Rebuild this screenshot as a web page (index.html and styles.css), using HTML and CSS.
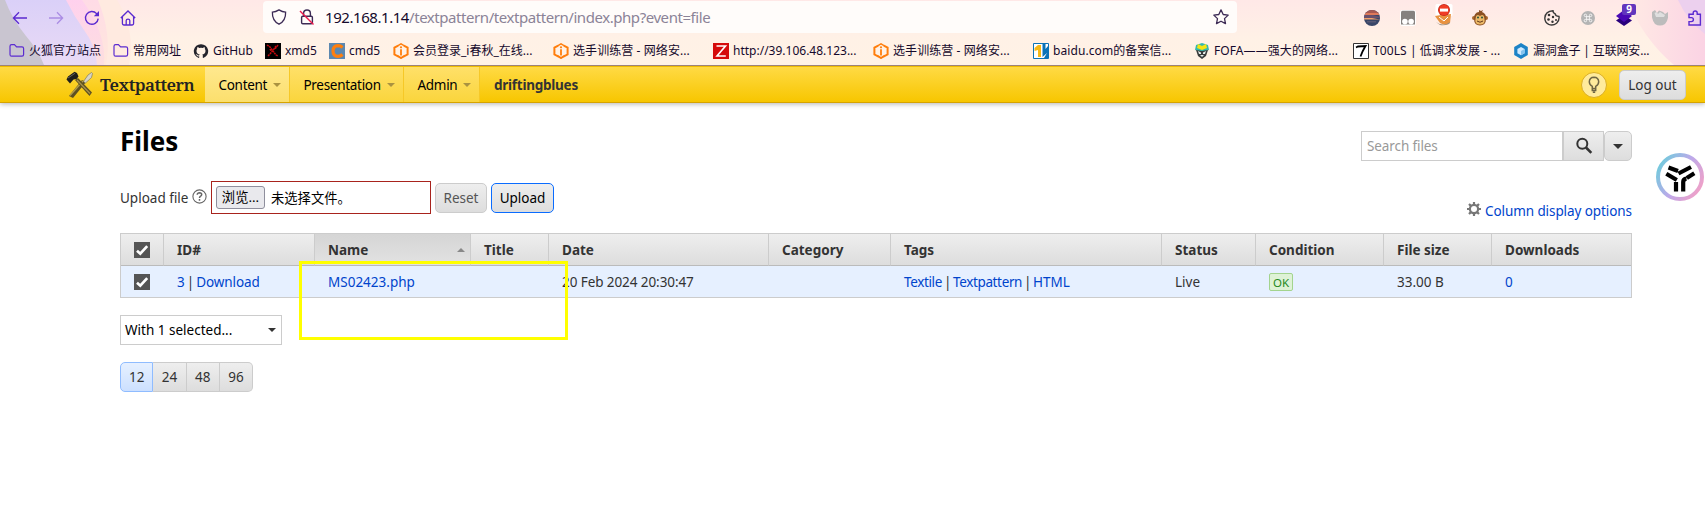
FILE: index.html
```html
<!DOCTYPE html>
<html lang="en">
<head>
<meta charset="utf-8">
<title>Textpattern - Files</title>
<link rel="stylesheet" href="styles.css">
</head>
<body>
<svg width="0" height="0" class="defs">
  <symbol id="folder" viewBox="0 0 16 16"><path d="M1 3.2Q1 1.6 2.6 1.6H5.4L7.6 3.8H13Q14.6 3.8 14.6 5.4V11.6Q14.6 13.2 13 13.2H2.6Q1 13.2 1 11.6Z" fill="none" stroke="#5b2bd0" stroke-width="1.2"/></symbol>
  <symbol id="ichun" viewBox="0 0 16 16"><path d="M5.2 2.6 1.4 4.6V11.4L6 14M10.8 2.6 14.6 4.6V11.4L10 14M4.2 12.6 8 15 11.8 12.6" fill="none" stroke="#ff7e0c" stroke-width="2"/><path d="M8 6.3V12.5" stroke="#ff7e0c" stroke-width="1.8"/><path d="M5 2.6 8 .8 11 2.6" fill="none" stroke="#ff7e0c" stroke-width="1.4"/><circle cx="8" cy="4.3" r="1.1" fill="#ff7e0c"/></symbol>
  <symbol id="tick" viewBox="0 0 16 16"><path d="M0 0H16V16H0Z" fill="#555"/><path d="M3 8.7 6.3 11.7 13.2 4.2" fill="none" stroke="#fff" stroke-width="2.7"/></symbol>
</svg>

<header class="browser">
  <svg class="theme" width="1705" height="65" viewBox="0 0 1705 65">
    <defs>
      <linearGradient id="gBase" x1="0" y1="0" x2="0" y2="1"><stop offset="0" stop-color="#ffe8e7"/><stop offset=".6" stop-color="#fff1e6"/><stop offset="1" stop-color="#fff2e5"/></linearGradient>
      <linearGradient id="gPink" x1="0" y1="0" x2="0" y2="1"><stop offset="0" stop-color="#ffcdf1"/><stop offset="1" stop-color="#fcdbe0"/></linearGradient>
      <linearGradient id="gRose" x1="0" y1="0" x2="0" y2="1"><stop offset="0" stop-color="#ffdbe6"/><stop offset="1" stop-color="#ffe8dc"/></linearGradient>
      <linearGradient id="gLilac" x1="0" y1="0" x2="0" y2="1"><stop offset="0" stop-color="#dad0f8"/><stop offset="1" stop-color="#e9daf5"/></linearGradient>
      <linearGradient id="gRight" x1="0" y1="0" x2="1" y2="0"><stop offset="0" stop-color="#ffeae4"/><stop offset="1" stop-color="#fbd3e4"/></linearGradient>
    </defs>
    <path d="M0 0H1705V65H0Z" fill="url(#gBase)"/>
    <path d="M0 0H117Q136 30 129 65H0Z" fill="#ffeae0"/>
    <path d="M0 0H98Q112 34 106 65H0Z" fill="url(#gRose)"/>
    <path d="M0 0H82Q107 34 104 65H0Z" fill="url(#gPink)" opacity=".7"/>
    <path d="M0 0H66Q74 16 84 30Q96 46 97 65H0Z" fill="url(#gLilac)"/>
    <path d="M0 0H5Q12 19 26 36Q38 50 44 65H0Z" fill="#c9c5d0"/>
    <path d="M1628 0Q1642 38 1674 65H1705V0Z" fill="url(#gRight)"/>
    <path d="M1678 0Q1688 22 1705 34V0Z" fill="#ecd0ee"/>
  </svg>
  <div class="toolbar">
    <div class="navicons">
      <svg width="16" height="16" viewBox="0 0 16 16" fill="none" stroke="#5b2bd0" stroke-width="1.3"><path d="M15 8H1.5M7 2.3 1.4 8 7 13.7"/></svg>
      <svg width="16" height="16" viewBox="0 0 16 16" fill="none" stroke="#ab8de4" stroke-width="1.3"><path d="M1 8H14.5M9 2.3 14.6 8 9 13.7"/></svg>
      <svg width="16" height="16" viewBox="0 0 16 16" fill="none" stroke="#5b2bd0" stroke-width="1.4"><path d="M14.2 8.6A6.4 6.4 0 1 1 12.6 3.6L14 5"/><path d="M15 1V6.2H9.8Z" fill="#5b2bd0" stroke="none"/></svg>
      <svg width="16" height="16" viewBox="0 0 16 16" fill="none" stroke="#5b2bd0" stroke-width="1.3"><path d="M.8 8 8 1 15.2 8M2.4 6.6V13.6Q2.4 15 3.8 15H12.2Q13.6 15 13.6 13.6V6.6M6.2 15V10.6Q6.2 9.2 8 9.2Q9.8 9.2 9.8 10.6V15"/></svg>
    </div>
    <div class="urlbar">
      <svg width="16" height="16" viewBox="0 0 16 16" fill="none" stroke="#3c2a55" stroke-width="1.3"><path d="M8 .9Q11.3 3 14.6 3.2Q15 11.6 8 15.2Q1 11.6 1.4 3.2Q4.7 3 8 .9Z"/></svg>
      <svg width="16" height="16" viewBox="0 0 16 16" fill="none"><path d="M4.6 7V4.4Q4.6 1 8 1Q11.4 1 11.4 4.4V7M3.8 7.2H12.2Q13.4 7.2 13.4 8.4V13.6Q13.4 14.8 12.2 14.8H3.8Q2.6 14.8 2.6 13.6V8.4Q2.6 7.2 3.8 7.2Z" stroke="#3c2a55" stroke-width="1.4"/><path d="M1 2 14.5 15.4" stroke="#ee1a4e" stroke-width="1.4"/></svg>
      <span class="url"><b>192.168.1.14</b>/textpattern/textpattern/index.php?event=file</span>
      <svg class="star" width="16" height="16" viewBox="0 0 16 16" fill="none" stroke="#3c2a55" stroke-width="1.3" stroke-linejoin="round"><path d="M8 .9 10.2 5.5 15.2 6.1 11.5 9.6 12.5 14.6 8 12.2 3.5 14.6 4.5 9.6 .8 6.1 5.8 5.5Z"/></svg>
    </div>
    <div class="exts">
      <svg width="16" height="16" viewBox="0 0 16 16"><clipPath id="disc"><circle cx="8" cy="8" r="8"/></clipPath><g clip-path="url(#disc)"><path d="M0 0H16V16H0Z" fill="#384668"/><path d="M0 0H16V3H0Z" fill="#a85851"/><path d="M0 3H16V5H0Z" fill="#df7959"/><path d="M0 5H9L16 7V8H0Z" fill="#6a506c"/><path d="M0 8H8L16 9.5H0Z" fill="#f3a06b"/><path d="M3 11.5H12V12.3H3Z" fill="#766a80"/></g></svg>
      <svg width="16" height="16" viewBox="0 0 16 16"><rect width="16" height="16" rx="3" fill="#fff"/><path d="M2.5.8H13.5Q15 .8 15 2.3V14.5H1V2.3Q1 .8 2.5 .8Z" fill="#85817f"/><circle cx="4.9" cy="11.6" r="2.8" fill="#fff"/><circle cx="11.1" cy="11.6" r="2.8" fill="#fff"/></svg>
      <svg class="up" width="20" height="22" viewBox="0 0 20 22"><rect x="1.5" width="17" height="12" rx="1.5" fill="#fff"/><path d="M1 12 7 11 17 10 16 19Q12 22 6 19Z" fill="#e89240"/><path d="M2 18Q9 23 16 18L15 20Q10 22 6 21Z" fill="#9c8e7e"/><path d="M5 13 10 17 14 13" stroke="#fff" fill="none"/><circle cx="10" cy="6" r="6" fill="#c6281c"/><circle cx="10" cy="6" r="5.2" fill="#f13c24"/><path d="M6 4.6H14V7.6H6Z" fill="#fff"/></svg>
      <svg width="16" height="16" viewBox="0 0 16 16"><circle cx="2" cy="8" r="2" fill="#a9672b"/><circle cx="14" cy="8" r="2" fill="#a9672b"/><path d="M7 0 9 1 11 0 10 2Q14.5 3.5 14 8.5Q14 15.5 8 15.6Q2 15.5 2 8.5Q2 2.5 7 2Z" fill="#8b5023"/><path d="M8 6Q12 3.5 12.3 8Q14 14.5 8 14.6Q2 14.5 3.7 8Q4 3.5 8 6Z" fill="#ecb968"/><circle cx="6" cy="7.5" r="1" fill="#24533e"/><circle cx="10" cy="7.5" r="1" fill="#24533e"/><path d="M5 11Q8 13.5 11 11" stroke="#64391b" fill="none"/></svg>
      <svg class="cookie" width="16" height="16" viewBox="0 0 16 16" fill="none"><path d="M9 .8Q9 3.2 11 3.6Q11.6 6.2 15 6.5Q15.6 10.5 12.6 13.2Q9 16 4.7 14.4Q.8 12.4 .8 8Q1.4 1.2 9 .8Z" stroke="#3a3a3a" stroke-width="1.4"/><g fill="#333"><circle cx="5" cy="5" r="1.3"/><circle cx="9" cy="7" r="1.2"/><circle cx="4.5" cy="9.5" r="1.3"/><circle cx="8.5" cy="11.8" r="1.2"/><circle cx="12" cy="10" r="1"/></g></svg>
      <svg width="16" height="16" viewBox="0 0 16 16"><circle cx="8" cy="8" r="7" fill="#b4b4b4"/><path d="M6.6 6.6H9.4V9.4H6.6ZM6.6 6.6H5.4A1.2 1.2 0 1 1 6.6 5.4ZM9.4 6.6V5.4A1.2 1.2 0 1 1 10.6 6.6ZM9.4 9.4H10.6A1.2 1.2 0 1 1 9.4 10.6ZM6.6 9.4V10.6A1.2 1.2 0 1 1 5.4 9.4Z" fill="none" stroke="#fff" stroke-width=".8"/></svg>
      <span class="layers"><svg width="16" height="16" viewBox="0 0 16 16"><path d="M8 5 16 10.5 8 16 0 10.5Z" fill="#28007c"/><path d="M8 0 16 6 8 12 0 6Z" fill="#4a09b5"/></svg><i>9</i></span>
      <svg width="16" height="16" viewBox="0 0 16 16"><path d="M0 2 3 0 5 3 7 .5 11 2 13 4 16 2Q17 10 13 14Q8 17 3 14Q-1 9 0 2Z" fill="#bcbcbc"/><path d="M2.5 3 4.5 2 6 4 8 2 12 4.5 13 5 12 7H4Z" fill="#dfdfdf"/></svg>
      <svg class="puzzle" width="16" height="16" viewBox="0 0 16 16" fill="none" stroke="#5b2bd0" stroke-width="1.4"><path d="M1 6V4.2H5.2V3Q5.2 1 7.2 1Q9.2 1 9.2 3V4.2H12.4V15H1V11.6H3.4Q5.4 11.6 5.4 9.6Q5.4 7.6 3.4 7.6H1Z"/></svg>
    </div>
  </div>
  <nav class="bookmarks">
    <a><svg><use href="#folder"/></svg><span>火狐官方站点</span></a>
    <a><svg><use href="#folder"/></svg><span>常用网址</span></a>
    <a><svg viewBox="0 0 16 16"><path fill="#24242c" d="M8 1.2A7 7 0 0 0 5.8 14.9C6.1 15 6.2 14.8 6.2 14.6V13.3C4.2 13.7 3.8 12.4 3.8 12.4C3.5 11.6 3 11.4 3 11.4C2.4 10.9 3.1 10.9 3.1 10.9C3.8 11 4.1 11.6 4.1 11.6C4.8 12.7 5.8 12.4 6.2 12.2C6.3 11.8 6.5 11.5 6.7 11.3C5.1 11.1 3.5 10.5 3.5 7.9C3.5 7.1 3.7 6.5 4.2 6C4.1 5.8 3.9 5.1 4.3 4.2C4.3 4.2 4.9 4 6.2 4.9A6.7 6.7 0 0 1 9.8 4.9C11.1 4 11.7 4.2 11.7 4.2C12.1 5.1 11.9 5.8 11.8 6C12.3 6.5 12.5 7.1 12.5 7.9C12.5 10.5 10.9 11.1 9.3 11.3C9.6 11.5 9.8 12 9.8 12.6V14.6C9.8 14.8 9.9 15 10.2 14.9A7 7 0 0 0 8 1.2Z"/></svg><span>GitHub</span></a>
    <a><svg viewBox="0 0 16 16"><path d="M0 0H16V16H0Z"/><path d="M2 2 5 4 8 8 11 12 13 13M11 3 9 6 5 11 3 13M13 2 10 6M5 6 6 8" stroke="#c90c10" stroke-width="1.5" stroke-dasharray="2 .7" fill="none"/></svg><span>xmd5</span></a>
    <a><svg viewBox="0 0 16 16"><path d="M0 0H16V16H0Z" fill="#5c88b0"/><path d="M13.5 4.5Q11.5 2.6 9 2.6Q4 2.8 4 8Q4 13.2 9 13.4Q11.5 13.4 13.5 11.5" fill="none" stroke="#ff7f0e" stroke-width="3.2"/></svg><span>cmd5</span></a>
    <a><svg><use href="#ichun"/></svg><span>会员登录_i春秋_在线...</span></a>
    <a class="loose"><svg><use href="#ichun"/></svg><span>选手训练营 - 网络安...</span></a>
    <a><svg viewBox="0 0 16 16"><path d="M0 0H16V16H0Z" fill="#d50b0b"/><path d="M3.5 3H12.5L4 13H12.8" fill="none" stroke="#fff" stroke-width="1.6"/></svg><span>http://39.106.48.123...</span></a>
    <a class="loose"><svg><use href="#ichun"/></svg><span>选手训练营 - 网络安...</span></a>
    <a class="loose"><svg viewBox="0 0 16 16"><path d="M.5.5H15.5V15.5H.5Z" fill="#fff" stroke="#0a73b8"/><path d="M1.5 5 5 2H8V14H5V7L1.5 8Z" fill="#f7b916"/><path d="M9.5 1H12.5V6L15 3V15H11L14 10 9.5 14Z" fill="#0a73b8"/></svg><span>baidu.com的备案信...</span></a>
    <a class="loose"><svg viewBox="0 0 16 16"><path d="M2 2 8 0 14 2 15 7 8 9 1 7Z" fill="#34b9af"/><path d="M4 1 8 3 12 1 13 5 8 7 3 5Z" fill="#f5e413"/><path d="M2 7 8 8 14 7 12 13 8 16 4 13Z" fill="#393b3b"/><path d="M4 8 7 9.5V11H5ZM12 8 9 9.5V11H11ZM6 12H10L8 14Z" fill="#e6eee9"/></svg><span>FOFA——强大的网络...</span></a>
    <a class="loose"><svg viewBox="0 0 16 16"><path d="M.5.5H15.5V15.5H.5Z" fill="#fff" stroke="#333"/><path d="M3 4.5 5 3.5 12.5 3Q9.5 8 7.5 13.5" fill="none" stroke="#000" stroke-width="1.8"/></svg><span>T00LS | 低调求发展 - ...</span></a>
    <a class="tight"><svg viewBox="0 0 16 16"><path d="M8 0 14.8 4V12L8 16 1.2 12V4Z" fill="#1c83c6"/><path d="M8 4 11.6 6V10.2L8 12.3 4.4 10.2V6Z" fill="#cfeaff"/><path d="M8 8 11.6 6V10.2L8 12.3Z" fill="#86c4ee"/></svg><span>漏洞盒子 | 互联网安...</span></a>
  </nav>
</header>

<div class="txpbar">
  <a class="brand">
    <svg width="28" height="28" viewBox="0 0 28 28"><path d="M3 25 7 27 20 11 16 9Z" fill="#5f5222"/><path d="M4 24.5 17 10" stroke="#b39c48" stroke-width="1.4"/><path d="M17.5 10.5 22 4 25.5 1.5 26.5 2.5 25.5 6.5 19.5 12Z" fill="#d7d4c4" stroke="#807b62" stroke-width=".7"/><path d="M9 9 12 7 26 21.5 23.5 25Z" fill="#5f5222"/><path d="M11 9 24 22.5" stroke="#a8924a" stroke-width="1.3"/><path d="M.5 8.5 2 5.5 8.5 .8 11 2 12.5 5.5 10.5 8 7.5 8.5 4 12.5Z" fill="#1f1e1b"/><path d="M2 7 9 2.3" stroke="#66645d" stroke-width="1"/></svg>
    <span>Textpattern</span>
  </a>
  <ul class="menu">
    <li class="on"><span>Content</span><i></i></li>
    <li><span>Presentation</span><i></i></li>
    <li><span>Admin</span><i></i></li>
  </ul>
  <b class="site">driftingblues</b>
  <span class="bulb"><svg width="12" height="18" viewBox="0 0 12 18" fill="none" stroke="#6f6644" stroke-width="1.5"><path d="M4.3 10.3Q1.3 8.8 1.3 5.8Q1.5 1.3 6 1.2Q10.5 1.3 10.7 5.8Q10.7 8.8 7.7 10.3V14.5H4.3ZM4.3 12.4H7.7M4.8 16.3H7.2"/></svg></span>
  <a class="btn logout">Log out</a>
</div>

<main>
  <div class="top">
    <h1>Files</h1>
    <form class="search">
      <div class="field">Search files</div>
      <div class="go"><svg width="18" height="18" viewBox="0 0 18 18" fill="none" stroke="#333"><circle cx="7.3" cy="6.8" r="5" stroke-width="2"/><path d="M11 10.5 16.3 15.8" stroke-width="2.6"/></svg></div>
      <div class="more"><i></i></div>
    </form>
  </div>
  <div class="mid">
    <div class="upload">
      <label>Upload file</label>
      <svg class="help" width="15" height="15" viewBox="0 0 15 15" fill="none" stroke="#666"><circle cx="7.5" cy="7.5" r="6.6" stroke-width="1.1"/><path d="M5.2 5.8Q5.4 3.8 7.5 3.8Q9.7 3.9 9.7 5.7Q9.6 6.7 8.3 7.4Q7.5 7.9 7.5 9M7.5 10.1V11.7" stroke-width="1.5"/></svg>
      <div class="file"><span class="browse">浏览...</span><span>未选择文件。</span></div>
      <a class="btn reset">Reset</a>
      <a class="btn send">Upload</a>
    </div>
    <a class="cols"><svg width="14" height="14" viewBox="0 0 14 14" fill="none" stroke="#777"><circle cx="7" cy="7" r="4.1" stroke-width="2.2"/><path d="M7 0V2.5M7 11.5V14M0 7H2.5M11.5 7H14M2 2 3.9 3.9M10.1 10.1 12 12M12 2 10.1 3.9M3.9 10.1 2 12" stroke-width="2.2"/></svg><span>Column display options</span></a>
  </div>

  <div class="tablebox">
    <table>
      <colgroup><col class="c1"><col class="c2"><col class="c3"><col class="c4"><col class="c5"><col class="c6"><col class="c7"><col class="c8"><col class="c9"><col class="c10"><col></colgroup>
      <thead><tr><th><svg class="tick"><use href="#tick"/></svg></th><th>ID#</th><th class="sorted"><div>Name<i></i></div></th><th>Title</th><th>Date</th><th>Category</th><th>Tags</th><th>Status</th><th>Condition</th><th>File size</th><th>Downloads</th></tr></thead>
      <tbody><tr><td><svg class="tick"><use href="#tick"/></svg></td><td class="links"><a>3</a> | <a>Download</a></td><td><a>MS02423.php</a></td><td></td><td class="date">20 Feb 2024 20:30:47</td><td></td><td class="links tags"><a>Textile</a> | <a>Textpattern</a> | <a class="wide">HTML</a></td><td>Live</td><td><span class="ok">OK</span></td><td>33.00 B</td><td><a>0</a></td></tr></tbody>
    </table>
    <div class="marker"></div>
  </div>

  <div class="select"><span>With 1 selected...</span><i></i></div>
  <div class="pages"><span class="cur">12</span><span>24</span><span>48</span><span>96</span></div>
</main>

<div class="floater"><svg width="48" height="48" viewBox="0 0 48 48"><defs><linearGradient id="ring" x1="0" y1=".2" x2="1" y2=".8"><stop offset="0" stop-color="#70cbdc"/><stop offset=".5" stop-color="#bda9ea"/><stop offset="1" stop-color="#f2a0c6"/></linearGradient></defs><circle cx="24" cy="24" r="22" fill="#fff" stroke="url(#ring)" stroke-width="4"/><g fill="none" stroke="#000" stroke-width="4.2"><path d="M12.5 14.6 22 18M10.3 20.8 20.8 27M22.5 20.5 35 14M38.3 20.3 30.8 25M27.2 38.5V29Q27.2 26 30.5 25.6M20 38.5V29"/></g></svg></div>
</body>
</html>
```
FILE: styles.css
```css
* { box-sizing: border-box; }
body { margin: 0; width: 1705px; height: 528px; overflow: hidden; background: #fff; color: #333; font: 13.5px/20px "Noto Sans", "Noto Sans CJK SC", sans-serif; position: relative; }
svg { display: block; flex: none; }
.defs { position: absolute; }

.browser { position: relative; height: 66px; border-bottom: 1px solid #9c8379; }
.theme { position: absolute; left: 0; top: 0; }
.toolbar, .bookmarks { position: relative; }
.toolbar { display: flex; height: 34px; align-items: center; padding-top: 1px; }
.navicons { display: flex; gap: 20px; padding-left: 12px; width: 263px; }
.urlbar { width: 974px; height: 32px; margin-top: -1px; background: #fffcfa; border-radius: 4px; display: flex; align-items: center; gap: 12px; padding: 0 8px 0 8px; }
.url { color: #8b8397; font-size: 15px; letter-spacing: -.44px; margin-left: -2px; white-space: nowrap; }
.url b { color: #15092c; font-weight: 400; }
.star { margin-left: auto; }
.exts { display: flex; align-items: center; gap: 20px; padding-left: 127px; width: 468px; overflow: hidden; height: 34px; }
.exts > * { flex: none; }
.up { margin: -5px -2px 0; }
.cookie { margin-left: 36px; }
.layers { position: relative; height: 16px; }
.layers i { position: absolute; left: 6px; top: -6px; width: 14px; height: 11px; background: #6236bd; color: #fff; border-radius: 2px; font: 700 10px/11px "Noto Sans", sans-serif; text-align: center; }
.bookmarks { height: 31px; display: grid; grid-template-columns: 104px 80px 72px 64px 64px 160px 160px 160px 160px 161px 159px 160px 150px; padding-left: 9px; align-items: center; font-size: 12px; line-height: 16px; color: #15092c; }
.bookmarks a { display: flex; gap: 4px; align-items: center; white-space: nowrap; padding-top: 3px; }
.bookmarks svg { width: 16px; height: 16px; }
.loose { letter-spacing: .08px; }
.tight { letter-spacing: -.15px; }

.txpbar { height: 37px; border-top: 1px solid #f0bc00; border-bottom: 1px solid #d6a300; background: linear-gradient(#ffda44, #f7c600); box-shadow: 0 1px 5px rgba(0,0,0,.3); display: flex; align-items: center; }
.brand { display: flex; align-items: center; width: 205px; padding-left: 66px; gap: 6px; color: #222; font: 600 17px/26px "Noto Serif", "DejaVu Serif", serif; letter-spacing: -.5px; }
.menu { display: flex; list-style: none; margin: 0; padding: 0; height: 35px; color: #000; letter-spacing: -.3px; }
.menu li { display: flex; align-items: center; justify-content: space-between; padding: 1px 8px 0 13.5px; border-right: 1px solid #f6c827; width: 85px; background: linear-gradient(#ffe069, #fad53c); }
.menu li + li { width: 114px; }
.menu li + li + li { width: 76px; }
.menu li.on { background: linear-gradient(#ffe88e, #fbdf6d); }
.menu i { border: 4px solid transparent; border-top-color: #aa9240; border-bottom: 0; }
.site { margin: 1px 0 0 14px; letter-spacing: -.25px; }
.bulb { margin-left: auto; width: 26px; height: 26px; border-radius: 50%; border: 1px solid #dcb022; background: #ffeb9c; display: flex; align-items: center; justify-content: center; }
.btn { display: flex; align-items: center; justify-content: center; height: 30px; border: 1px solid #ccc; border-radius: 5px; background: linear-gradient(#eee, #ddd); }
.logout { width: 67px; margin: 0 19px 0 12px; }

main { padding: 28px 73px 0 120px; }
.top { display: flex; justify-content: space-between; height: 53px; }
h1 { margin: -8px 0 0; color: #000; font-size: 26px; line-height: 36px; }
.search { display: flex; height: 30px; }
.field { width: 202px; border: 1px solid #ccc; padding: 4px 5px; color: #999; letter-spacing: -.1px; }
.go { width: 41px; border: 1px solid #ccc; background: linear-gradient(#eee, #ddd); display: flex; align-items: center; justify-content: center; }
.more { width: 28px; border: 1px solid #ccc; border-radius: 5px; background: linear-gradient(#eee, #ddd); display: flex; align-items: center; justify-content: center; }
.more i { border: 5px solid transparent; border-top-color: #333; border-bottom: 0; }
.mid { display: flex; justify-content: space-between; height: 49px; }
.upload { display: flex; align-items: center; margin-top: -3px; height: 33px; }
.upload label { width: 73px; padding-top: 1px; }
.help { margin: -2px 3px 0 -1px; }
.file { width: 220px; height: 33px; border: 1px solid #a8231d; display: flex; align-items: center; gap: 6px; padding-left: 4px; color: #000; font-size: 13.3px; margin: 0 4px 0 1px; }
.browse { width: 49px; height: 23px; border: 1px solid #8f8f9d; border-radius: 3px; background: #e9e9ed; line-height: 21px; text-align: center; }
.reset { width: 52px; color: #555; margin: 1px 4px 0 0; }
.send { width: 63px; border-color: #0a6cff; color: #000; margin-top: 1px; }
.cols { display: flex; align-items: center; gap: 4px; color: #04c; height: 20px; margin-top: 17px; letter-spacing: -.08px; }
.cols svg { margin-top: -4px; }
.tablebox { position: relative; }
table { border-collapse: separate; border-spacing: 0; table-layout: fixed; width: 1512px; border: 1px solid #ccc; }
.c1 { width: 43px; } .c2 { width: 151px; } .c3 { width: 156px; } .c4 { width: 78px; } .c5 { width: 220px; } .c6 { width: 122px; } .c7 { width: 271px; } .c8 { width: 94px; } .c9 { width: 128px; } .c10 { width: 108px; }
th, td { padding: 0 0 0 13px; text-align: left; white-space: nowrap; }
th { height: 32px; background: linear-gradient(#eee, #ddd); border-right: 1px solid #ccc; border-bottom: 1px solid #bbb; }
th:last-child { border-right: 0; }
td { height: 31px; background: #e6f0ff; }
td a { color: #04c; }
.links { word-spacing: -1.2px; letter-spacing: -.12px; }
.tags { letter-spacing: -.36px; }
.wide { letter-spacing: 0; }
.date { letter-spacing: -.08px; }
th.sorted { background: linear-gradient(#d5d5d5, #e2e2e2); }
.sorted div { display: flex; justify-content: space-between; align-items: center; padding-right: 5px; }
.sorted i { border: 4px solid transparent; border-bottom-color: #888; border-top: 0; }
.tick { width: 16px; height: 16px; }
.ok { display: block; width: 24px; height: 18px; margin-top: 1px; border: 1px solid #a3d48e; border-radius: 2px; background: #def2d6; color: #24891e; font-size: 11.5px; line-height: 17px; text-align: center; }
.marker { position: absolute; left: 179px; top: 28px; width: 269px; height: 79px; border: 3px solid #ff0; }
.select { width: 162px; height: 30px; margin-top: 17px; border: 1px solid #ccc; display: flex; align-items: center; justify-content: space-between; padding: 0 5px 0 4px; color: #000; }
.select i { border: 4px solid transparent; border-top-color: #333; border-bottom: 0; }
.pages { display: flex; margin-top: 17px; }
.pages span { width: 33.3px; height: 30px; border: 1px solid #ccc; border-left-width: 0; background: linear-gradient(#eee, #ddd); text-align: center; line-height: 29px; }
.pages .cur { border: 1px solid #8fbcff; border-radius: 5px 0 0 5px; background: linear-gradient(#e6f0ff, #cce0ff); }
.pages span:last-child { border-radius: 0 5px 5px 0; }
.floater { position: absolute; left: 1656px; top: 153px; }
```
